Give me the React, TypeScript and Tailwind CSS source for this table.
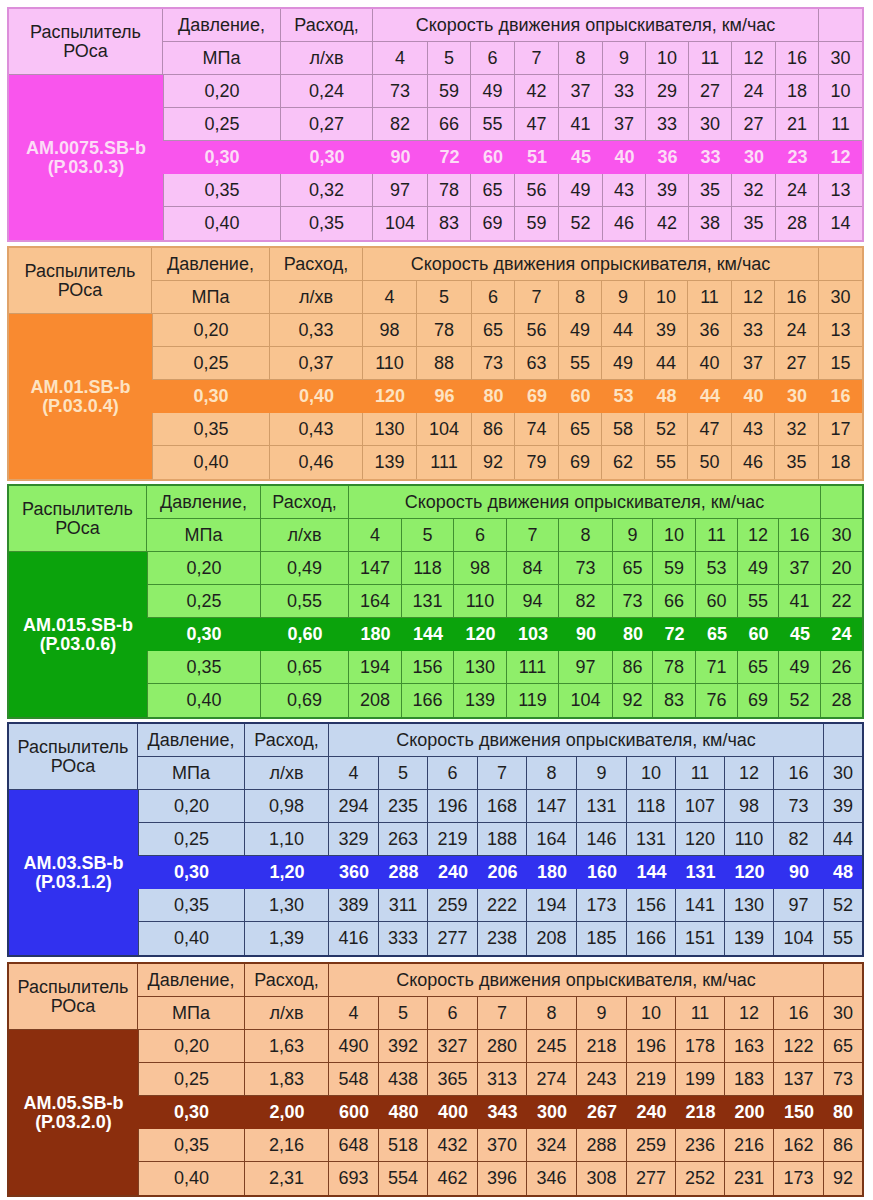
const speeds = ["4", "5", "6", "7", "8", "9", "10", "11", "12", "16", "30"]

type Theme = {
    model: [string, string]
    grid: string
    mt: string
    frame: string
    light: string
    strong: string
    line: string
    hiText: string
    rows: string[][]
}

const tables: Theme[] = [
    {
        model: ["AM.0075.SB-b", "(P.03.0.3)"],
        grid: "grid-cols-[154px_118px_92px_55px_43px_44px_44px_44px_43px_43px_43px_44px_43px_43px]",
        mt: "mt-[7px]",
        frame: "border-[#dc8fda]",
        light: "bg-[#f9c3f7]",
        strong: "bg-[#f955ed]",
        line: "border-[#b58ab3]",
        hiText: "text-[#fcdcf6]",
        rows: [
            ["0,20", "0,24", "73", "59", "49", "42", "37", "33", "29", "27", "24", "18", "10"],
            ["0,25", "0,27", "82", "66", "55", "47", "41", "37", "33", "30", "27", "21", "11"],
            ["0,30", "0,30", "90", "72", "60", "51", "45", "40", "36", "33", "30", "23", "12"],
            ["0,35", "0,32", "97", "78", "65", "56", "49", "43", "39", "35", "32", "24", "13"],
            ["0,40", "0,35", "104", "83", "69", "59", "52", "46", "42", "38", "35", "28", "14"],
        ],
    },
    {
        model: ["AM.01.SB-b", "(P.03.0.4)"],
        grid: "grid-cols-[143px_118px_93px_54px_55px_43px_44px_43px_43px_43px_44px_43px_44px_43px]",
        mt: "mt-[4px]",
        frame: "border-[#e0a36a]",
        light: "bg-[#f9c490]",
        strong: "bg-[#f98a30]",
        line: "border-[#d19c68]",
        hiText: "text-[#fde3c2]",
        rows: [
            ["0,20", "0,33", "98", "78", "65", "56", "49", "44", "39", "36", "33", "24", "13"],
            ["0,25", "0,37", "110", "88", "73", "63", "55", "49", "44", "40", "37", "27", "15"],
            ["0,30", "0,40", "120", "96", "80", "69", "60", "53", "48", "44", "40", "30", "16"],
            ["0,35", "0,43", "130", "104", "86", "74", "65", "58", "52", "47", "43", "32", "17"],
            ["0,40", "0,46", "139", "111", "92", "79", "69", "62", "55", "50", "46", "35", "18"],
        ],
    },
    {
        model: ["AM.015.SB-b", "(P.03.0.6)"],
        grid: "grid-cols-[138px_114px_88px_53px_52px_53px_52px_54px_40px_43px_42px_41px_42px_41px]",
        mt: "mt-[3px]",
        frame: "border-[#2f8a2c]",
        light: "bg-[#8fee6a]",
        strong: "bg-[#0ba30c]",
        line: "border-[#3f9030]",
        hiText: "text-white",
        rows: [
            ["0,20", "0,49", "147", "118", "98", "84", "73", "65", "59", "53", "49", "37", "20"],
            ["0,25", "0,55", "164", "131", "110", "94", "82", "73", "66", "60", "55", "41", "22"],
            ["0,30", "0,60", "180", "144", "120", "103", "90", "80", "72", "65", "60", "45", "24"],
            ["0,35", "0,65", "194", "156", "130", "111", "97", "86", "78", "71", "65", "49", "26"],
            ["0,40", "0,69", "208", "166", "139", "119", "104", "92", "83", "76", "69", "52", "28"],
        ],
    },
    {
        model: ["AM.03.SB-b", "(P.03.1.2)"],
        grid: "grid-cols-[129px_107px_84px_50px_49px_50px_49px_50px_50px_49px_49px_49px_50px_38px]",
        mt: "mt-[3px]",
        frame: "border-[#263566]",
        light: "bg-[#c6d7ef]",
        strong: "bg-[#3131ef]",
        line: "border-[#34436c]",
        hiText: "text-white",
        rows: [
            ["0,20", "0,98", "294", "235", "196", "168", "147", "131", "118", "107", "98", "73", "39"],
            ["0,25", "1,10", "329", "263", "219", "188", "164", "146", "131", "120", "110", "82", "44"],
            ["0,30", "1,20", "360", "288", "240", "206", "180", "160", "144", "131", "120", "90", "48"],
            ["0,35", "1,30", "389", "311", "259", "222", "194", "173", "156", "141", "130", "97", "52"],
            ["0,40", "1,39", "416", "333", "277", "238", "208", "185", "166", "151", "139", "104", "55"],
        ],
    },
    {
        model: ["AM.05.SB-b", "(P.03.2.0)"],
        grid: "grid-cols-[129px_107px_84px_50px_49px_50px_49px_50px_50px_49px_49px_49px_50px_38px]",
        mt: "mt-[5px]",
        frame: "border-[#7a3516]",
        light: "bg-[#f9c49a]",
        strong: "bg-[#8b2e0d]",
        line: "border-[#7e4022]",
        hiText: "text-white",
        rows: [
            ["0,20", "1,63", "490", "392", "327", "280", "245", "218", "196", "178", "163", "122", "65"],
            ["0,25", "1,83", "548", "438", "365", "313", "274", "243", "219", "199", "183", "137", "73"],
            ["0,30", "2,00", "600", "480", "400", "343", "300", "267", "240", "218", "200", "150", "80"],
            ["0,35", "2,16", "648", "518", "432", "370", "324", "288", "259", "236", "216", "162", "86"],
            ["0,40", "2,31", "693", "554", "462", "396", "346", "308", "277", "252", "231", "173", "92"],
        ],
    },
]

function SprayTable({ t }: { t: Theme }) {
    const base = `flex items-center justify-center whitespace-nowrap ${t.line}`
    const lastCol = speeds.length + 1

    return (
        <div className={`ml-[7px] w-[857px] grid grid-rows-[repeat(7,33px)] border-2 ${t.frame} ${t.grid} ${t.mt}`}>
            <div className={`${base} ${t.light} row-span-2 border-r border-b flex-col leading-[19px]`}>
                <span>Распылитель</span>
                <span>РОса</span>
            </div>
            <div className={`${base} ${t.light} border-r border-b`}>Давление,</div>
            <div className={`${base} ${t.light} border-r border-b`}>Расход,</div>
            <div className={`${base} ${t.light} col-span-10 border-r border-b`}>
                Скорость движения опрыскивателя, км/час
            </div>
            <div className={`${base} ${t.light} border-b`}></div>

            <div className={`${base} ${t.light} border-r border-b`}>МПа</div>
            <div className={`${base} ${t.light} border-r border-b`}>л/хв</div>
            {speeds.map((s, i) => (
                <div key={s} className={`${base} ${t.light} border-b ${i < speeds.length - 1 ? "border-r" : ""}`}>
                    {s}
                </div>
            ))}

            <div className={`${t.strong} ${t.hiText} row-span-5 flex flex-col items-center justify-center font-bold leading-[19px]`}>
                <span>{t.model[0]}</span>
                <span>{t.model[1]}</span>
            </div>
            {t.rows.map((row, r) =>
                row.map((v, c) => {
                    if (r === 2) {
                        return (
                            <div key={`${r}-${c}`} className={`flex items-center justify-center font-bold ${t.strong} ${t.hiText}`}>
                                {v}
                            </div>
                        )
                    }
                    return (
                        <div
                            key={`${r}-${c}`}
                            className={`${base} ${t.light} ${c === 0 ? "border-l" : ""} ${c < lastCol ? "border-r" : ""} ${r < 4 ? "border-b" : ""}`}
                        >
                            {v}
                        </div>
                    )
                })
            )}
        </div>
    )
}

export default function App() {
    return (
        <div className="w-[873px] h-[1200px] bg-white text-[18px] text-[#1e1e1e] font-['Liberation_Sans',Arial,sans-serif] overflow-hidden">
            {tables.map((t) => (
                <SprayTable key={t.model[0]} t={t} />
            ))}
        </div>
    )
}
